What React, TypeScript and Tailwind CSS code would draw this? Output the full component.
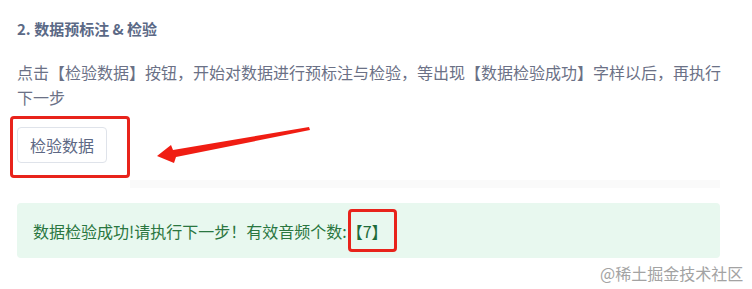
import React from 'react';

const cjk = { fontFamily: '"Noto Sans CJK SC", "Noto Sans", sans-serif' };

export default function App() {
    return <div className="relative w-[752px] h-[289px] overflow-hidden bg-white" style={ cjk }>
        <div className="flex flex-col items-start pl-[17px] pt-[19px]">
            {/* Title */ }
            <h3 className="text-[15px] leading-[20px] font-bold text-[#5b6986]">2. 数据预标注 &amp; 检验</h3>

            {/* Description */ }
            <p className="mt-[21px] text-[16px] leading-[25px] text-[#6b7186]">
                点击【检验数据】按钮，开始对数据进行预标注与检验，等出现【数据检验成功】字样以后，再执行<br/>下一步
            </p>

            {/* Button */ }
            <button className="mt-[17px] flex items-center justify-center w-[90px] h-[36px] border border-[#dfe3ea] rounded-[4px] bg-white text-[16px] text-[#5d6884]">
                检验数据
            </button>

            <div className="mt-[17px] ml-[113px] w-[590px] h-[8px] bg-[#fafafa]"/>

            {/* Result */ }
            <div className="mt-[15px] w-[703px] h-[55px] flex items-center pl-[16px] rounded-[4px] bg-[#e8f8ef] text-[16px] text-[#2a7640]">
                数据检验成功!请执行下一步！有效音频个数:<span className="text-[#1e6b3a]">【7】</span>
            </div>
        </div>

        {/* Annotations */ }
        <div className="absolute left-[10px] top-[116px] w-[120px] h-[62px] border-[3px] border-[#e8231b] rounded-[4px]"/>
        <div className="absolute left-[348px] top-[209px] w-[49px] h-[43px] border-[3px] border-[#e8231b] rounded-[4px]"/>
        <svg className="absolute left-0 top-0" width="752" height="289">
            <polygon points="157,156 171,145 173,150 309,127 310,130 176,157 174,163" fill="#f01d13"/>
        </svg>

        <div className="absolute left-[600px] top-[263px] text-[16px] leading-[20px] text-[#a3a3a3]">@稀土掘金技术社区</div>
    </div>
}
